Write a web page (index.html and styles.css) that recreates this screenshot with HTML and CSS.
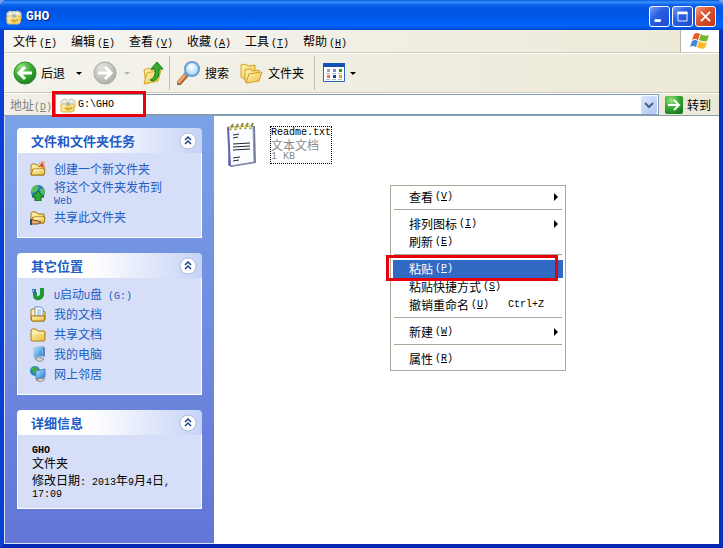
FILE: index.html
```html
<!DOCTYPE html>
<html lang="zh-CN">
<head>
  <meta charset="UTF-8">
  <meta name="viewport" content="width=device-width, initial-scale=1.0">
  <title>GHO</title>
  <link rel="stylesheet" href="styles.css">
</head>
<body>
  <!-- Shared icons -->
  <svg class="sprite" aria-hidden="true">
    <defs>
      <linearGradient id="gold" x1="0" y1="0" x2="1" y2="1">
        <stop offset="0" stop-color="#fff6b8"/><stop offset="1" stop-color="#edbc3c"/>
      </linearGradient>
      <linearGradient id="screen" x1="0" y1="0" x2="1" y2="1">
        <stop offset="0" stop-color="#b9ecff"/><stop offset="1" stop-color="#1679dd"/>
      </linearGradient>
      <radialGradient id="green" cx="35%" cy="25%" r="80%">
        <stop offset="0" stop-color="#9be486"/><stop offset="0.5" stop-color="#3fae38"/><stop offset="1" stop-color="#187c1c"/>
      </radialGradient>
      <radialGradient id="grey" cx="35%" cy="25%" r="80%">
        <stop offset="0" stop-color="#e4e4e0"/><stop offset="1" stop-color="#adada8"/>
      </radialGradient>
      <radialGradient id="glass" cx="45%" cy="35%" r="70%">
        <stop offset="0" stop-color="#ffffff"/><stop offset="1" stop-color="#98cff5"/>
      </radialGradient>
    </defs>
    <symbol id="drive" viewBox="0 0 16 16">
      <path d="M1 4l3-2 4 1 4-1 3 2v6H1z" fill="#e8e5d6" stroke="#c9c4ae"/>
      <path d="M3 4l2 1M10 4l2 1M7 3h2" stroke="#fff"/>
      <path d="M1 8l2-1h3l2 2 2-2h3l2 1-1 6-2 1H3l-2-1z" fill="url(#gold)" stroke="#e0bf62"/>
      <circle cx="8" cy="7" r="2" fill="#aab5b8"/>
      <path d="M4 12l3-2 2 1 3-1v3H4z" fill="#dba92c"/>
      <path d="M3 13h3M10 13h3" stroke="#fff8cd"/>
    </symbol>
    <symbol id="folder" viewBox="0 0 16 16">
      <path d="M1 4l1-1h4l2 2h6v9H1z" fill="url(#gold)" stroke="#a67b16"/>
      <path d="M1 14l2-6h12l-1 6z" fill="url(#gold)" stroke="#a67b16"/>
      <path d="M4 9h9" stroke="#fffbd8"/>
    </symbol>
    <symbol id="folder-closed" viewBox="0 0 16 16">
      <path d="M1 4l1-1h4l2 2h6l1 1v8l-1 1H2l-1-1z" fill="url(#gold)" stroke="#a67b16"/>
      <path d="M2 7h12" stroke="#fffbd8"/>
    </symbol>
    <symbol id="chevrons" viewBox="0 0 18 18">
      <circle cx="9" cy="9" r="8" fill="#fff" stroke="#b3bddb"/>
      <path d="M6 8l3-3 3 3M6 12l3-3 3 3" fill="none" stroke="#1c3f8c" stroke-width="1.5"/>
    </symbol>
  </svg>

  <div class="window">
    <header class="titlebar">
      <svg class="icon16"><use href="#drive"/></svg>
      <h1>GHO</h1>
      <button class="win-btn" aria-label="最小化"><svg viewBox="0 0 21 21"><path d="M5 15h7" stroke="#fff" stroke-width="3"/></svg></button>
      <button class="win-btn" aria-label="最大化"><svg viewBox="0 0 21 21"><path d="M5.500 6v9.500h10V6" fill="none" stroke="#fff"/><path d="M5 6.500h11" stroke="#fff" stroke-width="3"/></svg></button>
      <button class="win-btn close" aria-label="关闭"><svg viewBox="0 0 21 21"><path d="M5.500 5.500l10 10M15.500 5.500l-10 10" stroke="#fff" stroke-width="2"/></svg></button>
    </header>

    <nav class="menubar">
      <button>文件<span class="en">(<u>F</u>)</span></button>
      <button>编辑<span class="en">(<u>E</u>)</span></button>
      <button>查看<span class="en">(<u>V</u>)</span></button>
      <button>收藏<span class="en">(<u>A</u>)</span></button>
      <button>工具<span class="en">(<u>T</u>)</span></button>
      <button>帮助<span class="en">(<u>H</u>)</span></button>
      <div class="flag">
        <svg viewBox="0 0 20 18">
          <path d="M4 2q3-2 6 0L8 8Q5 6 2 8z" fill="#ee5a25"/>
          <path d="M11 2q4 3 8 1l-2 6q-4 1-8-1z" fill="#77b72a"/>
          <path d="M2 9q3-2 6 0l-2 6q-3-2-6 0z" fill="#4489da"/>
          <path d="M9 9q4 3 8 1l-2 6q-4 2-8-1z" fill="#f7bd22"/>
        </svg>
      </div>
    </nav>

    <div class="toolbar">
      <button class="tool">
        <svg class="icon24" viewBox="0 0 24 24"><circle cx="12" cy="12" r="11" fill="url(#green)" stroke="#318c2d"/><path d="M19 12H7M12 6l-6 6 6 6" fill="none" stroke="#fff" stroke-width="3"/></svg>
        后退
      </button>
      <button class="drop" aria-label="后退列表"></button>
      <button class="tool forward" aria-label="前进" disabled>
        <svg class="icon24" viewBox="0 0 24 24"><circle cx="12" cy="12" r="11" fill="url(#grey)" stroke="#a9a9a4"/><path d="M5 12h12M12 6l6 6-6 6" fill="none" stroke="#fff" stroke-width="3"/></svg>
      </button>
      <button class="drop off" aria-label="前进列表" disabled></button>
      <button class="tool up" aria-label="向上">
        <svg class="icon24" viewBox="0 0 24 24">
          <path d="M3 9l5-2 2 2 7-2v11l-12 5z" fill="url(#gold)" stroke="#d1a72b"/>
          <path d="M3 23l3-11 14-3-3 11z" fill="url(#gold)" stroke="#d1a72b"/>
          <path d="M9 19q6-2 5-11h-4l6-7 6 7h-4q1 10-6 12z" fill="#37ab32" stroke="#187b1c"/>
        </svg>
      </button>
      <span class="divider"></span>
      <button class="tool">
        <svg class="icon24" viewBox="0 0 24 24">
          <path d="M2 22l8-9" stroke="#9c5d39" stroke-width="5" stroke-linecap="round"/>
          <path d="M2 21l7-8" stroke="#efa866" stroke-width="3" stroke-linecap="round"/>
          <path d="M8 14l2-2" stroke="#7994b5" stroke-width="4"/>
          <circle cx="15" cy="8" r="7" fill="url(#glass)" stroke="#6b9dd2" stroke-width="2"/>
        </svg>
        搜索
      </button>
      <button class="tool folders">
        <svg class="icon24" viewBox="0 0 24 24">
          <path d="M1 16V4l5-1 2 2 7-1v12l-11 2z" fill="url(#gold)" stroke="#d2a12c"/>
          <path d="M5 20V9l5-1 2 2 7-1v10l-12 3z" fill="url(#gold)" stroke="#d2a12c"/>
          <path d="M6 22l3-9 13-2-3 9z" fill="url(#gold)" stroke="#d2a12c"/>
        </svg>
        文件夹
      </button>
      <span class="divider"></span>
      <button class="tool views" aria-label="查看方式">
        <svg class="icon24" viewBox="0 0 24 24">
          <path d="M1.500 3.500h21v17h-21z" fill="#fff" stroke="#2c65c0"/>
          <path d="M1 4h22" stroke="#1551b5" stroke-width="4"/>
          <path d="M5 9.500h3" stroke="#a19ac8" stroke-width="3"/><path d="M11 9.500h3" stroke="#8f8db5" stroke-width="3"/><path d="M17 9.500h3" stroke="#1f9a2f" stroke-width="3"/>
          <path d="M5 15.500h3" stroke="#ed7557" stroke-width="3"/><path d="M11 15.500h3" stroke="#1241a5" stroke-width="3"/><path d="M17 15.500h3" stroke="#d2a716" stroke-width="3"/>
          <path d="M4 12.500h4M10 12.500h4M16 12.500h4M4 18.500h4M10 18.500h4M16 18.500h4" stroke="#b4b8c4"/>
        </svg>
        <span class="caret"></span>
      </button>
    </div>

    <form class="addressbar">
      <label for="address">地址<span class="en">(<u>D</u>)</span></label>
      <div class="address-field">
        <svg class="icon16"><use href="#drive"/></svg>
        <input id="address" class="en" type="text" value="G:\GHO">
        <button type="button" class="combo" aria-label="地址列表"><svg viewBox="0 0 16 18"><path d="M4 7l4 4 4-4" fill="none" stroke="#4d6185" stroke-width="2"/></svg></button>
        <span class="mark mark-address"></span>
      </div>
      <button type="button" class="go">
        <svg viewBox="0 0 18 18"><rect width="18" height="18" rx="2" fill="url(#green)"/><path d="M3 9h10M9 4l5 5-5 5" fill="none" stroke="#fff" stroke-width="2"/></svg>
        转到
      </button>
    </form>

    <div class="content">
      <aside class="sidebar">
        <section class="panel">
          <div class="panel-head"><h2>文件和文件夹任务</h2><button aria-label="折叠"><svg><use href="#chevrons"/></svg></button></div>
          <ul class="links">
            <li>
              <svg class="icon16" viewBox="0 0 16 16"><use href="#folder"/><path d="M12 0v7M9 2l6 4M15 1L9 6" stroke="#ec6c21"/><circle cx="12" cy="4" r="1.500" fill="#e03c1c"/></svg>
              <a href="#">创建一个新文件夹</a>
            </li>
            <li>
              <svg class="icon16" viewBox="0 0 16 16"><circle cx="8" cy="7" r="7" fill="#267cc0"/><path d="M2 3l4-3 3 2-2 4-4 2-2-1zM10 4l4-1 1 6-4 1z" fill="#58bc58"/><path d="M8 6l6 6h-3v4H5v-4H2z" fill="#2da834" stroke="#0e6718"/></svg>
              <a href="#">将这个文件夹发布到<br><span class="en">Web</span></a>
            </li>
            <li>
              <svg class="icon16" viewBox="0 0 16 16"><use href="#folder"/><path d="M0 11h3l5 1 3 1-3 2H0z" fill="#e9ad73" stroke="#75502d"/><path d="M0 10h2v6H0z" fill="#344a75"/></svg>
              <a href="#">共享此文件夹</a>
            </li>
          </ul>
        </section>

        <section class="panel">
          <div class="panel-head"><h2>其它位置</h2><button aria-label="折叠"><svg><use href="#chevrons"/></svg></button></div>
          <ul class="links">
            <li>
              <svg class="icon16" viewBox="0 0 16 16"><path d="M5 6v3q0 4 4 3 3-1 3-4V2" fill="none" stroke="#1d9a36" stroke-width="4"/><path d="M2 3h4v5H3z" fill="#326eaf"/><path d="M3 4h1v1H3z" fill="#fff"/></svg>
              <a href="#"><span class="en">U</span>启动<span class="en">U</span>盘<span class="en"> (G:)</span></a>
            </li>
            <li>
              <svg class="icon16" viewBox="0 0 16 16"><use href="#folder-closed"/><path d="M5 1h6l2 2v7H5z" fill="#fff" stroke="#6590c4"/><path d="M7 4h4M7 6h4M7 8h4" stroke="#6da6df"/><path d="M1 10h14l-1 5H2z" fill="url(#gold)" stroke="#a67b16"/></svg>
              <a href="#">我的文档</a>
            </li>
            <li>
              <svg class="icon16"><use href="#folder-closed"/></svg>
              <a href="#">共享文档</a>
            </li>
            <li>
              <svg class="icon16" viewBox="0 0 16 16"><path d="M5 13l4-2 5 2-4 3z" fill="#d5d2ca" stroke="#8f8c91"/><path d="M4 2l9-2v10l-9 2z" fill="url(#screen)" stroke="#a8bddb"/><path d="M13 0l2 2v8l-2 1z" fill="#5d81b4"/></svg>
              <a href="#">我的电脑</a>
            </li>
            <li>
              <svg class="icon16" viewBox="0 0 16 16"><circle cx="5" cy="5" r="5" fill="#2687cd"/><path d="M1 3l4-3 3 3-3 5z" fill="#47ac42"/><path d="M6 14l4-2 5 1-4 3z" fill="#d5d2ca" stroke="#8f8c91"/><path d="M6 5l9-2v8l-9 2z" fill="url(#screen)" stroke="#6282ad"/></svg>
              <a href="#">网上邻居</a>
            </li>
          </ul>
        </section>

        <section class="panel">
          <div class="panel-head"><h2>详细信息</h2><button aria-label="折叠"><svg><use href="#chevrons"/></svg></button></div>
          <div class="details">
            <p><b class="en">GHO</b>文件夹</p>
            <p>修改日期<span class="en">: 2013</span>年<span class="en">9</span>月<span class="en">4</span>日<span class="en">,</span><br><span class="en">17:09</span></p>
          </div>
        </section>
      </aside>

      <main class="files">
        <div class="file">
          <svg class="file-icon" viewBox="0 0 32 46">
            <path d="M4 5l25-1 1 37-25 4-3-2z" fill="#707b9d"/>
            <path d="M2 5l25-1 1 36-24 4z" fill="#fcfdff" stroke="#8c94b8"/>
            <path d="M2 5l2 39" stroke="#6a61bd" stroke-width="2"/>
            <path d="M4 8l3-6M9 8l3-6M14 7l3-6M19 7l3-6M24 7l3-6" stroke="#928942" stroke-width="2"/>
            <path d="M3 5l3 2M8 5l3 2M13 4l3 2M18 4l3 2M23 4l3 2" stroke="#dbd45f" stroke-width="2"/>
            <path d="M7 13l6-1M7 16l5-1M7 22l17-1M7 25l17-1M7 28l17-1M7 36l7-1M7 39l6-1" stroke="#202633"/>
          </svg>
          <div class="file-name">
            <span class="en">Readme.txt</span>
            <small>文本文档</small>
            <small class="en">1 KB</small>
          </div>
        </div>
      </main>
    </div>
  </div>

  <!-- Right-click menu -->
  <div class="context-menu" role="menu">
    <button role="menuitem">查看<span class="en">(<u>V</u>)</span><i class="sub"></i></button>
    <hr>
    <button role="menuitem">排列图标<span class="en">(<u>I</u>)</span><i class="sub"></i></button>
    <button role="menuitem">刷新<span class="en">(<u>E</u>)</span></button>
    <hr>
    <button role="menuitem" class="active">粘贴<span class="en">(<u>P</u>)</span><span class="mark mark-paste"></span></button>
    <button role="menuitem">粘贴快捷方式<span class="en">(<u>S</u>)</span></button>
    <button role="menuitem">撤销重命名<span class="en">(<u>U</u>)</span><kbd class="en">Ctrl+Z</kbd></button>
    <hr>
    <button role="menuitem">新建<span class="en">(<u>W</u>)</span><i class="sub"></i></button>
    <hr>
    <button role="menuitem">属性<span class="en">(<u>R</u>)</span></button>
  </div>
</body>
</html>
```
FILE: styles.css
```css
* {
  box-sizing: border-box;
}

html {
  background: #7d9fe6;
}

body {
  margin: 0;
  position: relative;
  font-family: "Noto Sans CJK SC", sans-serif;
  font-size: 12px;
  line-height: 12px;
  color: #000;
}

button,
input {
  font: inherit;
  color: inherit;
  border: 0;
  padding: 0;
  margin: 0;
  background: none;
}

h1,
h2,
p,
ul {
  margin: 0;
  padding: 0;
}

svg {
  display: block;
  flex: none;
}

/* Half-width text; the zero line height keeps mixed lines at 12px */
.en {
  font-family: "Liberation Mono", "Noto Sans CJK SC", monospace;
  font-size: 10px;
  line-height: 0;
  white-space: pre;
}

.sprite {
  position: absolute;
  width: 0;
  height: 0;
}

.icon16 {
  width: 16px;
  height: 16px;
}

.icon24 {
  width: 24px;
  height: 24px;
}

.window {
  min-height: 100vh;
  display: flex;
  flex-direction: column;
  border: solid #0a3fd6;
  border-width: 0 4px 4px;
  border-right-color: #0831c0;
  border-bottom-color: #0628b4;
  border-radius: 7px 7px 0 0;
  background: #0a3fd6;
}

/* Title bar */
.titlebar {
  height: 30px;
  display: flex;
  align-items: center;
  gap: 2px;
  margin: 0 -4px;
  padding: 3px 7px 0 6px;
  border-radius: 7px 7px 0 0;
  background: linear-gradient(#0058d8 0, #3d92ff 2px, #0862ea 5px, #0054e0 9px, #0059ea 18px, #0265fb 26px, #0144cc 30px);
}

.titlebar h1 {
  flex: 1;
  padding-left: 2px;
  font-family: "Liberation Mono", monospace;
  font-size: 13px;
  color: #fff;
  text-shadow: 1px 1px #0a1883;
}

.win-btn {
  width: 21px;
  height: 21px;
  border: 1px solid #fff;
  border-radius: 3px;
  background: linear-gradient(135deg, #7a9df5, #2a5fe3 40%, #1c4bd0);
}

.win-btn svg {
  width: 19px;
  height: 19px;
}

.win-btn.close {
  background: linear-gradient(135deg, #ee9a80, #dc5430 40%, #c33a15);
}

/* Menu bar */
.menubar {
  height: 23px;
  display: flex;
  padding-left: 1px;
  background: linear-gradient(90deg, #f6f5f0, #ece9d8);
  border-bottom: 1px solid #d0cdbc;
}

.menubar button {
  width: 58px;
  padding-left: 8px;
  text-align: left;
  white-space: nowrap;
}

.menubar .en {
  margin-left: 2px;
}

.flag {
  width: 39px;
  margin-left: auto;
  display: flex;
  align-items: center;
  justify-content: center;
  background: #fff;
  border-left: 1px solid #b7b4a4;
}

.flag svg {
  width: 20px;
  height: 18px;
}

/* Toolbar */
.toolbar {
  height: 40px;
  display: flex;
  align-items: center;
  padding-left: 9px;
  background: linear-gradient(90deg, #f4f3ec, #ece9d8);
  border-top: 1px solid #fff;
  border-bottom: 1px solid #cbc8b6;
}

.tool {
  display: flex;
  align-items: center;
  gap: 4px;
}

.drop {
  width: 28px;
  height: 24px;
  display: flex;
  align-items: center;
  justify-content: center;
}

.drop::before,
.caret {
  content: "";
  border: 3px solid transparent;
  border-top-color: #000;
  border-bottom: 0;
}

.drop.off::before {
  border-top-color: #b9b7ac;
}

.drop.off {
  width: 20px;
}

.up {
  margin-left: 4px;
}

.folders {
  margin-left: 11px;
}

.divider {
  width: 1px;
  height: 34px;
  margin: 0 7px 0 4px;
  background: #c3c0af;
}

.folders + .divider {
  margin-left: 10px;
}

/* Address bar */
.addressbar {
  height: 23px;
  display: flex;
  align-items: center;
  padding: 0 8px 0 6px;
  background: linear-gradient(90deg, #f0eee6, #ece9d8);
  border-top: 1px solid #fff;
  border-bottom: 1px solid #8b9bb0;
}

.addressbar label {
  color: #858378;
}

.address-field {
  position: relative;
  flex: 1;
  height: 21px;
  display: flex;
  align-items: center;
  margin: 0 6px 0 3px;
  padding: 0 1px 0 4px;
  background: #fff;
  border: 1px solid #7f9db9;
}

.address-field input {
  flex: 1;
  min-width: 0;
  padding-left: 2px;
  line-height: 12px;
  outline: none;
}

.combo {
  width: 16px;
  height: 18px;
  border-radius: 2px;
  background: linear-gradient(135deg, #dce7fe, #b1c6f4);
}

.go {
  display: flex;
  align-items: center;
  gap: 4px;
}

.go svg {
  width: 18px;
  height: 18px;
}

.mark {
  position: absolute;
  border: 3px solid #e8000c;
  pointer-events: none;
}

.mark-address {
  left: -4px;
  top: -4px;
  width: 94px;
  height: 26px;
}

/* Side panels */
.content {
  flex: 1;
  display: flex;
  background: #fff;
}

.sidebar {
  width: 210px;
  flex: none;
  display: flex;
  flex-direction: column;
  gap: 15px;
  padding: 12px 12px 32px;
  border: solid #d4e0fa;
  border-width: 0 0 1px 1px;
  background: linear-gradient(#7ba2e7, #6375d6);
}

.panel-head {
  height: 25px;
  display: flex;
  align-items: center;
  justify-content: space-between;
  padding: 0 5px 0 14px;
  border-radius: 4px 4px 0 0;
  background: linear-gradient(90deg, #fff 40%, #c6d3f7);
}

.panel-head h2 {
  font-size: 13px;
  font-weight: bold;
  color: #215dc6;
}

.panel-head svg {
  width: 18px;
  height: 18px;
}

.links,
.details {
  border: 1px solid #fff;
  border-top: 0;
  background: #d6dff7;
}

.links {
  display: flex;
  flex-direction: column;
  gap: 4px;
  padding: 8px 12px 12px;
  list-style: none;
}

.links li {
  min-height: 16px;
  display: flex;
  align-items: center;
  gap: 8px;
}

.links a {
  color: #215dc6;
  text-decoration: none;
}

.details {
  display: flex;
  flex-direction: column;
  gap: 5px;
  padding: 10px 14px;
}

.details b {
  display: block;
  line-height: 12px;
}

/* File list */
.files {
  flex: 1;
  padding: 6px 12px;
}

.file {
  display: flex;
  align-items: center;
  gap: 12px;
}

.file-icon {
  width: 32px;
  height: 46px;
}

.file-name {
  display: flex;
  flex-direction: column;
  border: 1px dotted #000;
}

.file-name .en {
  line-height: 12px;
}

.file-name small {
  font-size: 12px;
  color: #8c8c8c;
}

.file-name small.en {
  font-size: 10px;
}

/* Context menu */
.context-menu {
  position: absolute;
  left: 390px;
  top: 185px;
  width: 176px;
  display: flex;
  flex-direction: column;
  padding: 2px;
  background: #fff;
  border: 1px solid #aca899;
}

.context-menu button {
  position: relative;
  height: 18px;
  display: flex;
  align-items: center;
  padding: 0 5px 0 16px;
}

.context-menu button > .en:first-child {
  margin-left: 2px;
}

.context-menu hr {
  height: 1px;
  width: 168px;
  margin: 3px auto 5px;
  border: 0;
  background: #aca899;
}

.context-menu .active {
  background: #316ac5;
  color: #fff;
}

.sub {
  margin-left: auto;
  border: 4px solid transparent;
  border-left-color: #000;
  border-right: 0;
}

.context-menu kbd {
  margin-left: auto;
  padding-right: 14px;
}

.mark-paste {
  left: -7px;
  top: -5px;
  width: 172px;
  height: 26px;
}
```
